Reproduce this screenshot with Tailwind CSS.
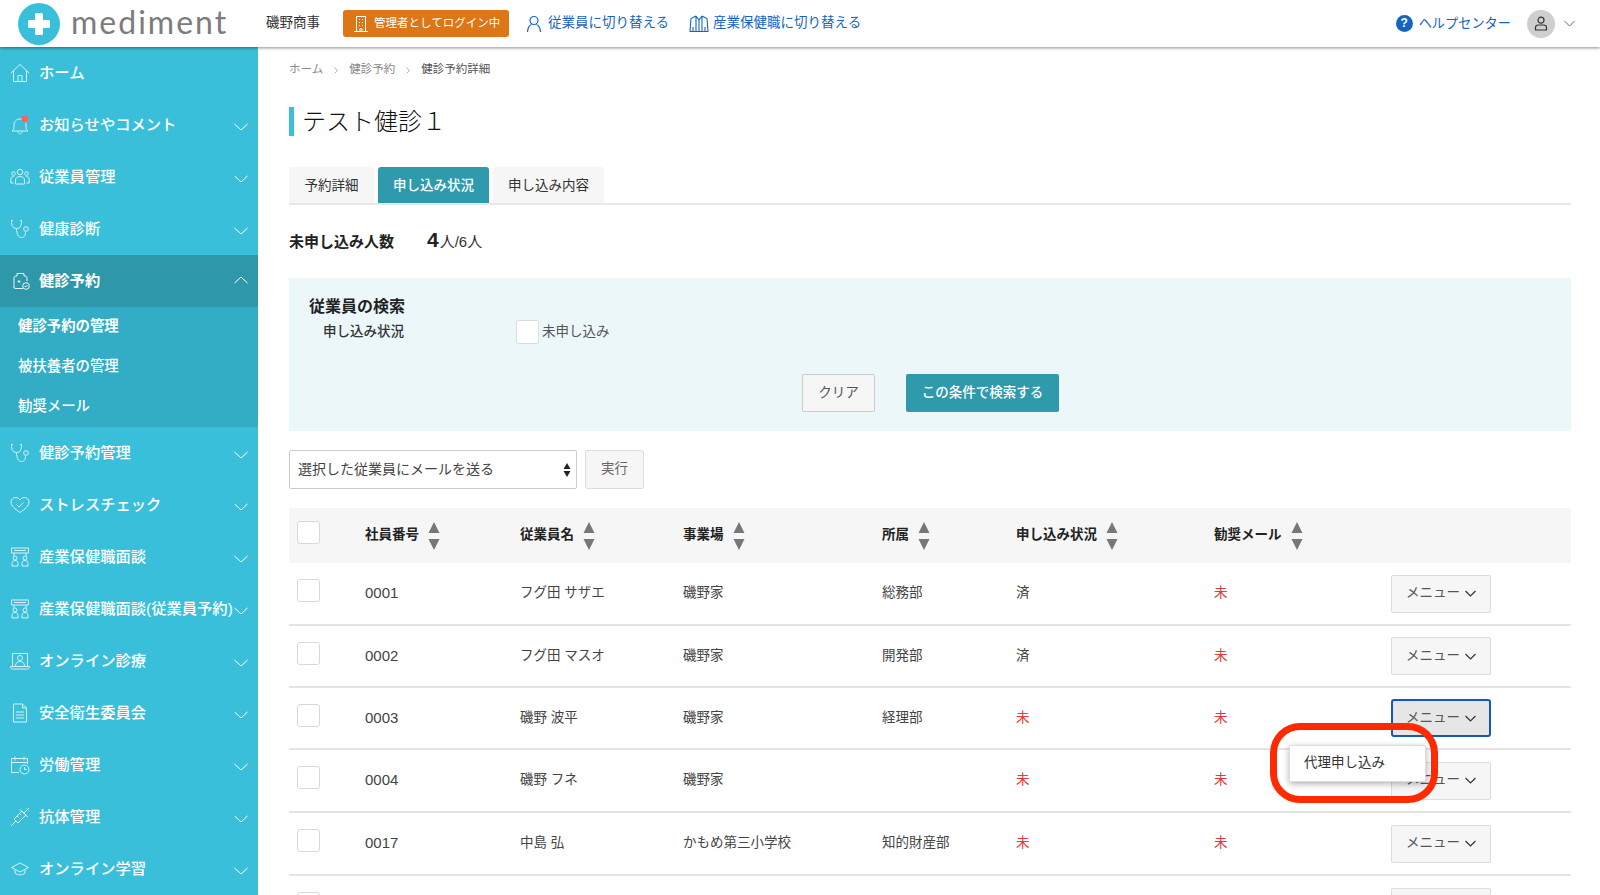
<!DOCTYPE html>
<html lang="ja">

<head>
    <meta charset="UTF-8">
    <meta name="viewport" content="width=device-width, initial-scale=1.0">
    <title>健診予約詳細 - mediment</title>
    <script src="https://cdn.jsdelivr.net/npm/@tailwindcss/browser@4"></script>
</head>

<body class="bg-white text-[#333] font-['Liberation_Sans','Noto_Sans_CJK_JP',sans-serif] h-[895px] overflow-hidden relative">
    <!-- Header -->
    <header class="h-[47px] flex items-center bg-white shadow-[0_1px_3px_rgba(0,0,0,0.45)] relative z-10">
        <a class="flex items-center ml-[18px] w-[248px]" href="#">
            <svg class="w-[42px] h-[42px]" viewBox="0 0 42 42">
                <circle cx="21" cy="21" r="21" fill="#3abfda"></circle>
                <path d="M17 11.500a1.500 1.500 0 0 1 1.500-1.500h5a1.500 1.500 0 0 1 1.500 1.500V17h5.500a1.500 1.500 0 0 1 1.500 1.500v5a1.500 1.500 0 0 1-1.500 1.500H25v5.500a1.500 1.500 0 0 1-1.500 1.500h-5a1.500 1.500 0 0 1-1.500-1.500V25h-5.500a1.500 1.500 0 0 1-1.500-1.500v-5a1.500 1.500 0 0 1 1.500-1.500H17z" fill="#fff"></path>
            </svg>
            <span class="ml-[11px] -mt-[4px] font-['Lato',sans-serif] text-[32px] leading-none tracking-[2px] text-[#7c7c7c]">mediment</span>
        </a>
        <span class="text-[13.5px]">磯野商事</span>
        <div class="ml-[23px] w-[166px] h-[27px] flex items-center bg-[#dc7616] rounded-[3px] text-white text-[11.5px] pl-[10px]">
            <svg class="w-[16px] h-[18px] mr-[5px] shrink-0" viewBox="0 0 16 18" fill="none" stroke="#fff" stroke-width="1">
                <path d="M3.500 16.500V1.500h9v15M1 16.500h14M6 4.500h1M9 4.500h1M6 7.500h1M9 7.500h1M6 10.500h1M9 10.500h1M7 16.500v-3h2v3"></path>
            </svg>
            管理者としてログイン中
        </div>
        <a class="ml-[17px] flex items-center text-[13.5px] text-[#1565c0]" href="#">
            <svg class="w-[16px] h-[18px] mr-[6px]" viewBox="0 0 16 18" fill="none" stroke="#1565c0" stroke-width="1.200">
                <circle cx="8" cy="5.500" r="4"></circle>
                <path d="M1.500 17c0-4 2-7 4-7.500M14.500 17c0-4-2-7-4-7.500"></path>
            </svg>
            従業員に切り替える
        </a>
        <a class="ml-[20px] flex items-center text-[13.5px] text-[#1565c0]" href="#">
            <svg class="w-[20px] h-[18px] mr-[4px]" viewBox="0 0 20 18" fill="none" stroke="#1565c0" stroke-width="1.100">
                <path d="M7 1L2 3.500 1 16.500h18L18 3.500 13 1M7 1l3 4 3-4M7 1v15.500M13 1v15.500M10 5v11.500M4 12v4.500M16 12v4.500"></path>
            </svg>
            産業保健職に切り替える
        </a>
        <a class="ml-auto flex items-center text-[13.2px] text-[#1565c0]" href="#">
            <span class="w-[17px] h-[17px] mr-[6px] rounded-full bg-[#1565c0] text-white text-[12px] font-bold flex items-center justify-center">?</span>
            ヘルプセンター
        </a>
        <span class="ml-[16px] w-[28px] h-[28px] rounded-full bg-[#cfcfcf] flex items-center justify-center">
            <svg class="w-[14px] h-[15px]" viewBox="0 0 14 15" fill="none" stroke="#333" stroke-width="1.200">
                <circle cx="7" cy="4.200" r="3"></circle>
                <path d="M1.500 14v-2.500c0-1.500 1.500-2.500 3-2.500h5c1.500 0 3 1 3 2.500V14z"></path>
            </svg>
        </span>
        <svg class="w-[11px] h-[7px] ml-[9px] mr-[25px]" viewBox="0 0 11 7" fill="none" stroke="#666" stroke-width="1">
            <path d="M0.500 1l5 5 5-5"></path>
        </svg>
    </header>

    <div class="flex h-[848px]">
        <!-- Sidebar -->
        <nav class="w-[258px] shrink-0 bg-[#3abfda] text-white text-[15.3px] font-medium overflow-hidden">
            <a class="h-[52px] flex items-center pl-[10px] pr-[10px] whitespace-nowrap" href="#">
                <svg class="w-[20px] h-[20px] mr-[9px] shrink-0" viewBox="0 0 20 20" fill="none" stroke="#d5f3f8" stroke-width="1">
                    <path d="M1 10l9-8.500 9 8.500M3.500 8v10.500h13V8M8 18.500v-6h4v6"></path>
                </svg>
                ホーム
            </a>
            <a class="h-[52px] flex items-center pl-[10px] pr-[10px] whitespace-nowrap" href="#">
                <svg class="w-[20px] h-[20px] mr-[9px] shrink-0" viewBox="0 0 20 20" fill="none" stroke="#d5f3f8" stroke-width="1">
                    <path d="M2 16c2-1.500 2-3 2-6s2-6 6-6 6 3 6 6 0 4.500 2 6zM8 16.500c0 3 4 3 4 0"></path>
                    <circle cx="15" cy="4" r="3.500" fill="#f4665f" stroke="none"></circle>
                </svg>
                お知らせやコメント
                <svg class="w-[14px] h-[8px] ml-auto mt-[3px] shrink-0" viewBox="0 0 14 8" fill="none" stroke="#fff" stroke-width="1"><path d="M0.500 1l6.500 6 6.500-6"></path></svg>
            </a>
            <a class="h-[52px] flex items-center pl-[10px] pr-[10px] whitespace-nowrap" href="#">
                <svg class="w-[20px] h-[20px] mr-[9px] shrink-0" viewBox="0 0 20 20" fill="none" stroke="#d5f3f8" stroke-width="1">
                    <circle cx="10" cy="5" r="2.800"></circle>
                    <circle cx="3.500" cy="6.500" r="1.800"></circle>
                    <circle cx="16.500" cy="6.500" r="1.800"></circle>
                    <path d="M5.500 17v-4c0-2 2-3.500 4.500-3.500s4.500 1.500 4.500 3.500v4zM3.500 16H0.800v-3.500c0-2 1.200-3 3-3M16.500 16h2.700v-3.500c0-2-1.200-3-3-3"></path>
                </svg>
                従業員管理
                <svg class="w-[14px] h-[8px] ml-auto mt-[3px] shrink-0" viewBox="0 0 14 8" fill="none" stroke="#fff" stroke-width="1"><path d="M0.500 1l6.500 6 6.500-6"></path></svg>
            </a>
            <a class="h-[52px] flex items-center pl-[10px] pr-[10px] whitespace-nowrap" href="#">
                <svg class="w-[20px] h-[20px] mr-[9px] shrink-0" viewBox="0 0 20 20" fill="none" stroke="#d5f3f8" stroke-width="1">
                    <path d="M3 1.500H1.500c0 5 1 8 5 8s5-3 5-8H10M6.500 9.500c0 5 1.500 9 5 9s4-3 4-6"></path>
                    <circle cx="16" cy="10" r="2.300"></circle>
                </svg>
                健康診断
                <svg class="w-[14px] h-[8px] ml-auto mt-[3px] shrink-0" viewBox="0 0 14 8" fill="none" stroke="#fff" stroke-width="1"><path d="M0.500 1l6.500 6 6.500-6"></path></svg>
            </a>
            <a class="h-[52px] flex items-center pl-[13px] pr-[10px] whitespace-nowrap bg-[#2e97a9] font-bold" href="#">
                <svg class="w-[17px] h-[20px] mr-[9px] shrink-0" viewBox="0 0 17 20" fill="none" stroke="#e6f7fa" stroke-width="1">
                    <path d="M1 17V7c0-1 .5-2 2-2h1V2.500h7V5h1c1.500 0 2 1 2 2v3M10 17.500H2c-.5 0-1-.5-1-1M6 9v3M4.500 10.500h3"></path>
                    <circle cx="13" cy="15" r="3.300"></circle>
                    <path d="M11.500 15l1 1 2-2"></path>
                </svg>
                健診予約
                <svg class="w-[14px] h-[8px] ml-auto -mt-[3px] shrink-0" viewBox="0 0 14 8" fill="none" stroke="#fff" stroke-width="1"><path d="M0.500 7l6.500-6 6.500 6"></path></svg>
            </a>
            <div class="bg-[#33adc5] text-[14.4px] pl-[18px]">
                <a class="h-[40px] pb-[1px] flex items-center font-bold" href="#">健診予約の管理</a>
                <a class="h-[40px] pb-[1px] flex items-center" href="#">被扶養者の管理</a>
                <a class="h-[40px] pb-[1px] flex items-center" href="#">勧奨メール</a>
            </div>
            <a class="h-[52px] flex items-center pl-[10px] pr-[10px] whitespace-nowrap" href="#">
                <svg class="w-[20px] h-[20px] mr-[9px] shrink-0" viewBox="0 0 20 20" fill="none" stroke="#d5f3f8" stroke-width="1">
                    <path d="M3 1.500H1.500c0 5 1 8 5 8s5-3 5-8H10M6.500 9.500c0 5 1.500 9 5 9s4-3 4-6"></path>
                    <circle cx="16" cy="10" r="2.300"></circle>
                </svg>
                健診予約管理
                <svg class="w-[14px] h-[8px] ml-auto mt-[3px] shrink-0" viewBox="0 0 14 8" fill="none" stroke="#fff" stroke-width="1"><path d="M0.500 1l6.500 6 6.500-6"></path></svg>
            </a>
            <a class="h-[52px] flex items-center pl-[10px] pr-[10px] whitespace-nowrap" href="#">
                <svg class="w-[20px] h-[20px] mr-[9px] shrink-0" viewBox="0 0 20 20" fill="none" stroke="#d5f3f8" stroke-width="1">
                    <path d="M10 17.500C5 14 1 11 1 7c0-3 2-4.500 4.500-4.500C7.500 2.500 9 3.500 10 5c1-1.500 2.500-2.500 4.500-2.500C17 2.500 19 4 19 7c0 4-4 7-9 10.500z"></path>
                    <path d="M6.500 9.500l2.500 2.500 4.500-4.500"></path>
                </svg>
                ストレスチェック
                <svg class="w-[14px] h-[8px] ml-auto mt-[3px] shrink-0" viewBox="0 0 14 8" fill="none" stroke="#fff" stroke-width="1"><path d="M0.500 1l6.500 6 6.500-6"></path></svg>
            </a>
            <a class="h-[52px] flex items-center pl-[10px] pr-[10px] whitespace-nowrap" href="#">
                <svg class="w-[20px] h-[20px] mr-[9px] shrink-0" viewBox="0 0 20 20" fill="none" stroke="#d5f3f8" stroke-width="1">
                    <path d="M1.500 1h17v5h-17zM4 3.500h12M4 6v3M16 6v3"></path>
                    <circle cx="5" cy="11" r="2"></circle>
                    <circle cx="15" cy="11" r="2"></circle>
                    <path d="M2 19v-2.500c0-2 1-3 3-3s3 1 3 3V19zM12 19v-2.500c0-2 1-3 3-3s3 1 3 3V19z"></path>
                </svg>
                産業保健職面談
                <svg class="w-[14px] h-[8px] ml-auto mt-[3px] shrink-0" viewBox="0 0 14 8" fill="none" stroke="#fff" stroke-width="1"><path d="M0.500 1l6.500 6 6.500-6"></path></svg>
            </a>
            <a class="h-[52px] flex items-center pl-[10px] pr-[10px] whitespace-nowrap" href="#">
                <svg class="w-[20px] h-[20px] mr-[9px] shrink-0" viewBox="0 0 20 20" fill="none" stroke="#d5f3f8" stroke-width="1">
                    <path d="M1.500 1h17v5h-17zM4 3.500h12M4 6v3M16 6v3"></path>
                    <circle cx="5" cy="11" r="2"></circle>
                    <circle cx="15" cy="11" r="2"></circle>
                    <path d="M2 19v-2.500c0-2 1-3 3-3s3 1 3 3V19zM12 19v-2.500c0-2 1-3 3-3s3 1 3 3V19z"></path>
                </svg>
                <span class="w-[190px]">産業保健職面談(従業員予約)</span>
                <svg class="w-[14px] h-[8px] ml-auto mt-[3px] shrink-0" viewBox="0 0 14 8" fill="none" stroke="#fff" stroke-width="1"><path d="M0.500 1l6.500 6 6.500-6"></path></svg>
            </a>
            <a class="h-[52px] flex items-center pl-[10px] pr-[10px] whitespace-nowrap" href="#">
                <svg class="w-[20px] h-[20px] mr-[9px] shrink-0" viewBox="0 0 20 20" fill="none" stroke="#d5f3f8" stroke-width="1">
                    <path d="M2.500 15V2.500h15V15M0.500 15.500h19c0 1.500-.5 2.500-2 2.500H2.500c-1.500 0-2-1-2-2.500z"></path>
                    <circle cx="10" cy="7" r="2.500"></circle>
                    <path d="M5.500 15c0-3 2-4.500 4.500-4.500s4.500 1.500 4.500 4.500"></path>
                </svg>
                オンライン診療
                <svg class="w-[14px] h-[8px] ml-auto mt-[3px] shrink-0" viewBox="0 0 14 8" fill="none" stroke="#fff" stroke-width="1"><path d="M0.500 1l6.500 6 6.500-6"></path></svg>
            </a>
            <a class="h-[52px] flex items-center pl-[10px] pr-[10px] whitespace-nowrap" href="#">
                <svg class="w-[20px] h-[20px] mr-[9px] shrink-0" viewBox="0 0 20 20" fill="none" stroke="#d5f3f8" stroke-width="1">
                    <path d="M3.500 1h9l4 4v14h-13zM12.500 1v4h4M6 9h8M6 12h8M6 15h8"></path>
                </svg>
                安全衛生委員会
                <svg class="w-[14px] h-[8px] ml-auto mt-[3px] shrink-0" viewBox="0 0 14 8" fill="none" stroke="#fff" stroke-width="1"><path d="M0.500 1l6.500 6 6.500-6"></path></svg>
            </a>
            <a class="h-[52px] flex items-center pl-[10px] pr-[10px] whitespace-nowrap" href="#">
                <svg class="w-[20px] h-[20px] mr-[9px] shrink-0" viewBox="0 0 20 20" fill="none" stroke="#d5f3f8" stroke-width="1">
                    <path d="M9 17.500H1.500V3.500h16V9M1.500 7.500h16M5 1.500v4M14 1.500v4"></path>
                    <circle cx="14.500" cy="14.500" r="4.500"></circle>
                    <path d="M14.500 12v2.500h2.300"></path>
                </svg>
                労働管理
                <svg class="w-[14px] h-[8px] ml-auto mt-[3px] shrink-0" viewBox="0 0 14 8" fill="none" stroke="#fff" stroke-width="1"><path d="M0.500 1l6.500 6 6.500-6"></path></svg>
            </a>
            <a class="h-[52px] flex items-center pl-[10px] pr-[10px] whitespace-nowrap" href="#">
                <svg class="w-[20px] h-[20px] mr-[9px] shrink-0" viewBox="0 0 20 20" fill="none" stroke="#d5f3f8" stroke-width="1">
                    <path d="M1 19l5-5M4 12l4 4 8-8-4-4zM10 2.500l7.500 7.500M14 6l5-5M16.500 1.500l2 2M7 9l1.500 1.500M9.500 6.500L11 8"></path>
                </svg>
                抗体管理
                <svg class="w-[14px] h-[8px] ml-auto mt-[3px] shrink-0" viewBox="0 0 14 8" fill="none" stroke="#fff" stroke-width="1"><path d="M0.500 1l6.500 6 6.500-6"></path></svg>
            </a>
            <a class="h-[52px] flex items-center pl-[10px] pr-[10px] whitespace-nowrap" href="#">
                <svg class="w-[20px] h-[20px] mr-[9px] shrink-0" viewBox="0 0 20 20" fill="none" stroke="#d5f3f8" stroke-width="1">
                    <path d="M10 4l8.500 4.500-8.500 4.500-8.500-4.500zM5 10.500v3.500c2.500 2.500 7.500 2.500 10 0v-3.500"></path>
                </svg>
                オンライン学習
                <svg class="w-[14px] h-[8px] ml-auto mt-[3px] shrink-0" viewBox="0 0 14 8" fill="none" stroke="#fff" stroke-width="1"><path d="M0.500 1l6.500 6 6.500-6"></path></svg>
            </a>
        </nav>

        <!-- Main Content -->
        <main class="flex-1 min-w-0 pl-[31px] pr-[29px]">
            <div class="h-[44px] pt-[2px] flex items-center text-[11.5px] text-[#888]">
                <span>ホーム</span>
                <svg class="w-[4px] h-[7px] mx-[11px]" viewBox="0 0 4 7" fill="none" stroke="#999" stroke-width="0.800"><path d="M0.500 0.500l3 3-3 3"></path></svg>
                <span>健診予約</span>
                <svg class="w-[4px] h-[7px] mx-[11px]" viewBox="0 0 4 7" fill="none" stroke="#999" stroke-width="0.800"><path d="M0.500 0.500l3 3-3 3"></path></svg>
                <span class="text-[#555]">健診予約詳細</span>
            </div>
            <h1 class="mt-[16px] h-[29px] border-l-[5px] border-[#3abfda] pl-[8px] text-[24px] leading-[29px] font-light text-[#111]">テスト健診１</h1>

            <div class="mt-[31px] h-[38px] flex items-end gap-[4px] border-b-2 border-[#e8e8e8] text-[13.5px]">
                <a class="h-[36px] w-[85px] pt-[2px] flex items-center justify-center bg-[#f6f6f6] rounded-t-[3px]" href="#">予約詳細</a>
                <a class="h-[36px] w-[111px] pt-[2px] flex items-center justify-center bg-[#2e9aac] text-white font-medium rounded-t-[3px]" href="#">申し込み状況</a>
                <a class="h-[36px] w-[111px] pt-[2px] flex items-center justify-center bg-[#f6f6f6] rounded-t-[3px]" href="#">申し込み内容</a>
            </div>

            <div class="mt-[20px] h-[34px] flex items-center">
                <span class="text-[15px] font-bold text-[#222] w-[138px]">未申し込み人数</span>
                <span class="text-[21px] -mt-[6px] font-bold text-[#222] leading-none">4</span>
                <span class="text-[15px] ml-[1px]">人/6人</span>
            </div>

            <!-- 検索 -->
            <section class="mt-[19px] h-[153px] bg-[#ecf7fa] pt-[19px] pl-[20px]">
                <h2 class="text-[16px] leading-[20px] font-bold text-[#222]">従業員の検索</h2>
                <div class="mt-[3px] flex items-center h-[24px]">
                    <span class="w-[207px] pl-[14px] text-[13.5px] font-medium">申し込み状況</span>
                    <span class="w-[23px] h-[24px] bg-white border border-[#ddd] rounded-[2px]"></span>
                    <span class="ml-[3px] text-[13.5px] text-[#555]">未申し込み</span>
                </div>
                <div class="mt-[30px] flex">
                    <button class="ml-[493px] w-[73px] h-[38px] bg-[#f6f6f6] border border-[#ccc] rounded-[2px] text-[13.5px] text-[#555]">クリア</button>
                    <button class="ml-[31px] w-[153px] h-[38px] bg-[#2e9aac] rounded-[2px] text-[13.5px] font-medium text-white">この条件で検索する</button>
                </div>
            </section>

            <div class="mt-[19px] flex gap-[8px]">
                <div class="relative w-[288px] h-[39px]">
                    <select class="appearance-none w-full h-full bg-white border border-[#ccc] rounded-[2px] pl-[8px] text-[14px] text-[#444]">
                        <option>選択した従業員にメールを送る</option>
                    </select>
                    <svg class="absolute right-[6px] top-[12px] w-[8px] h-[16px] pointer-events-none" viewBox="0 0 8 16" fill="#222">
                        <path d="M4 1l3.500 6h-7zM4 15L0.500 9h7z"></path>
                    </svg>
                </div>
                <button class="w-[59px] h-[39px] bg-[#f6f6f6] border border-[#ddd] rounded-[2px] text-[13.5px] text-[#666]">実行</button>
            </div>

            <!-- 従業員テーブル -->
            <table class="mt-[19px] w-full table-fixed text-[13.5px] text-[#444] border-collapse">
                <colgroup>
                    <col class="w-[76px]">
                    <col class="w-[155px]">
                    <col class="w-[163px]">
                    <col class="w-[199px]">
                    <col class="w-[134px]">
                    <col class="w-[198px]">
                    <col>
                </colgroup>
                <thead>
                    <tr class="h-[55px] bg-[#f6f6f6] text-left text-[#222]">
                        <th class="pl-[8px] font-normal"><span class="block mb-[6px] w-[23px] h-[23px] bg-white border border-[#d8d8d8] rounded-[3px]"></span></th>
                        <th class="font-bold"><span class="flex items-center">社員番号<svg class="w-[12px] h-[28px] ml-[9px]" viewBox="0 0 12 28" fill="#777"><path d="M6 0l5.500 11H.5zM6 28L.5 17h11z"></path></svg></span></th>
                        <th class="font-bold"><span class="flex items-center">従業員名<svg class="w-[12px] h-[28px] ml-[9px]" viewBox="0 0 12 28" fill="#777"><path d="M6 0l5.500 11H.5zM6 28L.5 17h11z"></path></svg></span></th>
                        <th class="font-bold"><span class="flex items-center">事業場<svg class="w-[12px] h-[28px] ml-[9px]" viewBox="0 0 12 28" fill="#777"><path d="M6 0l5.500 11H.5zM6 28L.5 17h11z"></path></svg></span></th>
                        <th class="font-bold"><span class="flex items-center">所属<svg class="w-[12px] h-[28px] ml-[9px]" viewBox="0 0 12 28" fill="#777"><path d="M6 0l5.500 11H.5zM6 28L.5 17h11z"></path></svg></span></th>
                        <th class="font-bold"><span class="flex items-center">申し込み状況<svg class="w-[12px] h-[28px] ml-[9px]" viewBox="0 0 12 28" fill="#777"><path d="M6 0l5.500 11H.5zM6 28L.5 17h11z"></path></svg></span></th>
                        <th class="font-bold"><span class="flex items-center">勧奨メール<svg class="w-[12px] h-[28px] ml-[9px]" viewBox="0 0 12 28" fill="#777"><path d="M6 0l5.500 11H.5zM6 28L.5 17h11z"></path></svg></span></th>
                    </tr>
                </thead>
                <tbody>
                    <tr class="h-[62px] border-b-2 border-[#e4e4e4]">
                        <td class="pl-[8px]"><span class="block mb-[6px] w-[23px] h-[23px] bg-white border border-[#d8d8d8] rounded-[3px]"></span></td>
                        <td class="text-[15px]">0001</td>
                        <td>フグ田 サザエ</td>
                        <td>磯野家</td>
                        <td>総務部</td>
                        <td>済</td>
                        <td class="text-[#e53935]"><span class="flex items-center"><span class="w-[177px]">未</span><button class="w-[100px] h-[38px] flex items-center justify-center gap-[5px] bg-[#f6f6f6] border border-[#ddd] rounded-[2px] text-[#555]">メニュー<svg class="w-[11px] h-[7px]" viewBox="0 0 11 7" fill="none" stroke="#333" stroke-width="1.200"><path d="M0.500 1l5 5 5-5"></path></svg></button></span></td>
                    </tr>
                    <tr class="h-[62px] border-b-2 border-[#e4e4e4]">
                        <td class="pl-[8px]"><span class="block mb-[6px] w-[23px] h-[23px] bg-white border border-[#d8d8d8] rounded-[3px]"></span></td>
                        <td class="text-[15px]">0002</td>
                        <td>フグ田 マスオ</td>
                        <td>磯野家</td>
                        <td>開発部</td>
                        <td>済</td>
                        <td class="text-[#e53935]"><span class="flex items-center"><span class="w-[177px]">未</span><button class="w-[100px] h-[38px] flex items-center justify-center gap-[5px] bg-[#f6f6f6] border border-[#ddd] rounded-[2px] text-[#555]">メニュー<svg class="w-[11px] h-[7px]" viewBox="0 0 11 7" fill="none" stroke="#333" stroke-width="1.200"><path d="M0.500 1l5 5 5-5"></path></svg></button></span></td>
                    </tr>
                    <tr class="h-[62px] border-b-2 border-[#e4e4e4]">
                        <td class="pl-[8px]"><span class="block mb-[6px] w-[23px] h-[23px] bg-white border border-[#d8d8d8] rounded-[3px]"></span></td>
                        <td class="text-[15px]">0003</td>
                        <td>磯野 波平</td>
                        <td>磯野家</td>
                        <td>経理部</td>
                        <td class="text-[#e53935]">未</td>
                        <td class="text-[#e53935]"><span class="flex items-center"><span class="w-[177px]">未</span><button class="w-[100px] h-[38px] flex items-center justify-center gap-[5px] bg-[#e6e6e6] border-2 border-[#1557c0] rounded-[3px] text-[#555]">メニュー<svg class="w-[11px] h-[7px]" viewBox="0 0 11 7" fill="none" stroke="#333" stroke-width="1.200"><path d="M0.500 1l5 5 5-5"></path></svg></button></span></td>
                    </tr>
                    <tr class="h-[63px] border-b-2 border-[#e4e4e4]">
                        <td class="pl-[8px]"><span class="block mb-[6px] w-[23px] h-[23px] bg-white border border-[#d8d8d8] rounded-[3px]"></span></td>
                        <td class="text-[15px]">0004</td>
                        <td>磯野 フネ</td>
                        <td>磯野家</td>
                        <td></td>
                        <td class="text-[#e53935]">未</td>
                        <td class="text-[#e53935]"><span class="flex items-center"><span class="w-[177px]">未</span><button class="w-[100px] h-[38px] flex items-center justify-center gap-[5px] bg-[#f6f6f6] border border-[#ddd] rounded-[2px] text-[#555]">メニュー<svg class="w-[11px] h-[7px]" viewBox="0 0 11 7" fill="none" stroke="#333" stroke-width="1.200"><path d="M0.500 1l5 5 5-5"></path></svg></button></span></td>
                    </tr>
                    <tr class="h-[63px] border-b-2 border-[#e4e4e4]">
                        <td class="pl-[8px]"><span class="block mb-[6px] w-[23px] h-[23px] bg-white border border-[#d8d8d8] rounded-[3px]"></span></td>
                        <td class="text-[15px]">0017</td>
                        <td>中島 弘</td>
                        <td>かもめ第三小学校</td>
                        <td>知的財産部</td>
                        <td class="text-[#e53935]">未</td>
                        <td class="text-[#e53935]"><span class="flex items-center"><span class="w-[177px]">未</span><button class="w-[100px] h-[38px] flex items-center justify-center gap-[5px] bg-[#f6f6f6] border border-[#ddd] rounded-[2px] text-[#555]">メニュー<svg class="w-[11px] h-[7px]" viewBox="0 0 11 7" fill="none" stroke="#333" stroke-width="1.200"><path d="M0.500 1l5 5 5-5"></path></svg></button></span></td>
                    </tr>
                    <tr class="h-[62px]">
                        <td class="pl-[8px]"><span class="block mb-[6px] w-[23px] h-[23px] bg-white border border-[#d8d8d8] rounded-[3px]"></span></td>
                        <td></td>
                        <td></td>
                        <td></td>
                        <td></td>
                        <td></td>
                        <td><span class="flex items-center"><span class="w-[177px]"></span><button class="w-[100px] h-[38px] bg-[#f6f6f6] border border-[#ddd] rounded-[2px]"></button></span></td>
                    </tr>
                </tbody>
            </table>
        </main>
    </div>

    <!-- 開いたメニューと注釈の赤枠 -->
    <div class="absolute left-[1289px] top-[745px] w-[137px] h-[37px] flex items-center pl-[14px] bg-white border border-[#ddd] rounded-[2px] shadow-[0_2px_6px_rgba(0,0,0,0.3)] text-[13.5px] text-[#333] z-20">代理申し込み</div>
    <div class="absolute left-[1270px] top-[723px] w-[168px] h-[80px] border-[7px] border-[#ff2a00] rounded-[30px] z-30"></div>
</body>

</html>
